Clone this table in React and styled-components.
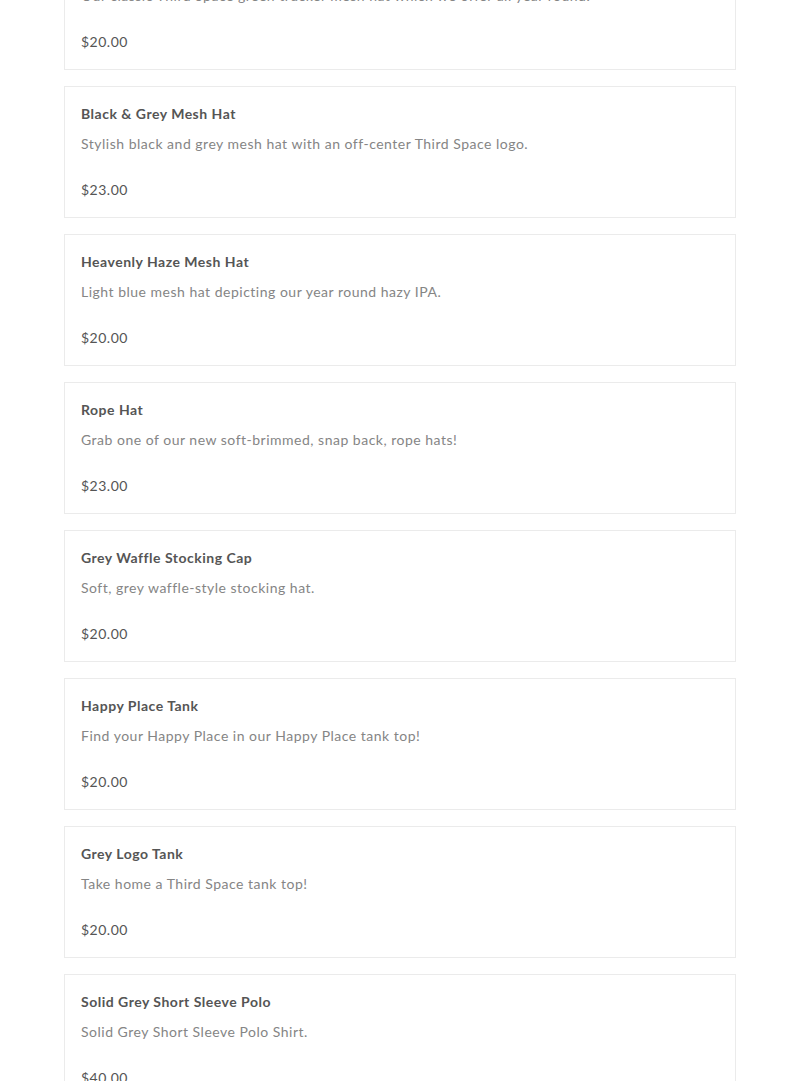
import React from "react";
import styled, { createGlobalStyle } from "styled-components";

const GlobalStyle = createGlobalStyle`
  html, body {
    margin: 0;
    padding: 0;
    background: #ffffff;
    overflow: hidden;
  }
  body {
    font-family: Lato, "Liberation Sans", sans-serif;
    letter-spacing: 0.5px;
  }
`;

const Page = styled.div`
  width: 672px;
  margin: -62px auto 0;
  display: flex;
  flex-direction: column;
  gap: 16px;
`;

const Card = styled.div`
  border: 1px solid #ebebeb;
  padding: 16px;
  display: flex;
  flex-direction: column;
`;

const Title = styled.div`
  font-size: 14px;
  line-height: 22px;
  font-weight: 700;
  color: #555555;
`;

const Description = styled.div`
  margin-top: 8px;
  font-size: 14px;
  line-height: 22px;
  color: #858585;
`;

const Price = styled.div`
  margin-top: 24px;
  font-size: 14px;
  line-height: 22px;
  color: #555555;
`;

const items = [
  {
    name: "Third Space Trucker Hat",
    desc: "Our classic Third Space green trucker mesh hat which we offer all year round.",
    price: "$20.00",
  },
  {
    name: "Black & Grey Mesh Hat",
    desc: "Stylish black and grey mesh hat with an off-center Third Space logo.",
    price: "$23.00",
  },
  {
    name: "Heavenly Haze Mesh Hat",
    desc: "Light blue mesh hat depicting our year round hazy IPA.",
    price: "$20.00",
  },
  {
    name: "Rope Hat",
    desc: "Grab one of our new soft-brimmed, snap back, rope hats!",
    price: "$23.00",
  },
  {
    name: "Grey Waffle Stocking Cap",
    desc: "Soft, grey waffle-style stocking hat.",
    price: "$20.00",
  },
  {
    name: "Happy Place Tank",
    desc: "Find your Happy Place in our Happy Place tank top!",
    price: "$20.00",
  },
  {
    name: "Grey Logo Tank",
    desc: "Take home a Third Space tank top!",
    price: "$20.00",
  },
  {
    name: "Solid Grey Short Sleeve Polo",
    desc: "Solid Grey Short Sleeve Polo Shirt.",
    price: "$40.00",
  },
];

const App = () => {
  return (
    <>
      <GlobalStyle />
      <Page>
        {items.map((item, index) => (
          <Card key={index}>
            <Title>{item.name}</Title>
            <Description>{item.desc}</Description>
            <Price>{item.price}</Price>
          </Card>
        ))}
      </Page>
    </>
  );
};

export default App;
